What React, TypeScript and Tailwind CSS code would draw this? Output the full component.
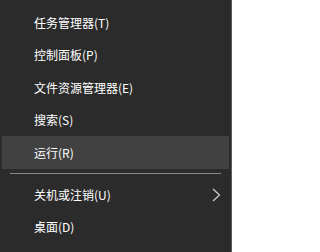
const topItems = [
  { label: "任务管理器(T)", h: "h-[33px]" },
  { label: "控制面板(P)", h: "h-[32px]" },
  { label: "文件资源管理器(E)", h: "h-[33px]" },
  { label: "搜索(S)", h: "h-[32px]" },
  { label: "运行(R)", h: "h-[33px]", active: true },
];

export default function App() {
  return (
    <div
      className="h-[252px] w-[232px] overflow-hidden border-r border-[#5c5c5c] bg-[#2b2b2b] pt-[6px] text-[12px] text-white"
      style={{ fontFamily: '"Noto Sans CJK SC", "Noto Sans", sans-serif' }}
    >
      {topItems.map((item) => (
        <div
          key={item.label}
          className={`mx-[2px] flex items-center pl-[32px] ${item.h} ${item.active ? "bg-[#414141]" : ""}`}
        >
          {item.label}
        </div>
      ))}

      <div className="mx-[10px] mt-[4px] h-px bg-[#888888]" />

      <div className="mx-[2px] mt-[5px] flex h-[32px] items-center justify-between pl-[32px] pr-[8px]">
        <span>关机或注销(U)</span>
        <svg width="9" height="14" viewBox="0 0 9 14" fill="none">
          <path d="M1 1 L7.5 7 L1 13" stroke="#d0d0d0" strokeWidth="1.2" />
        </svg>
      </div>
      <div className="mx-[2px] flex h-[32px] items-center pl-[32px]">桌面(D)</div>
    </div>
  );
}
